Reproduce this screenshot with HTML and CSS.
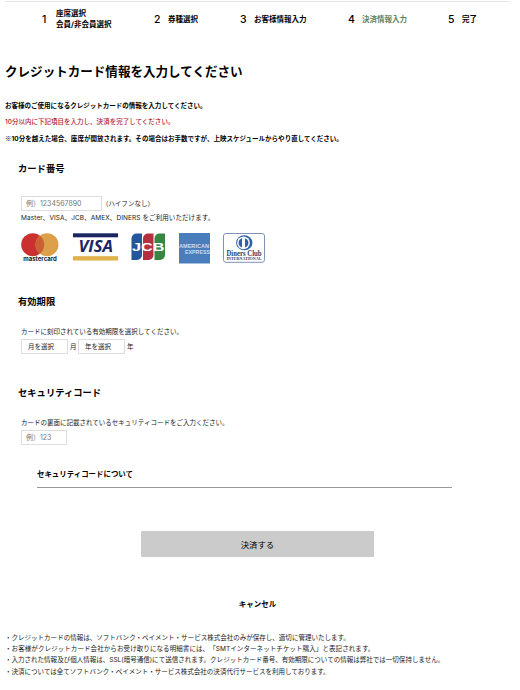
FILE: index.html
```html
<!DOCTYPE html>
<html lang="ja">
<head>
  <meta charset="UTF-8">
  <meta name="viewport" content="width=device-width, initial-scale=1.0">
  <title>決済情報入力</title>
  <link rel="stylesheet" href="styles.css">
</head>
<body>
  <header>
    <ol class="steps">
      <li class="step1"><span class="num">1</span><span class="double">座席選択<br>会員/非会員選択</span></li>
      <li class="step2"><span class="num">2</span><span>券種選択</span></li>
      <li class="step3"><span class="num">3</span><span>お客様情報入力</span></li>
      <li class="step4 current"><span class="num">4</span><span>決済情報入力</span></li>
      <li class="step5"><span class="num">5</span><span>完了</span></li>
    </ol>
  </header>

  <main>
    <h1>クレジットカード情報を入力してください</h1>
    <div class="lead">
      <p>お客様のご使用になるクレジットカードの情報を入力してください。</p>
      <p class="alert">10分以内に下記項目を入力し、決済を完了してください。</p>
      <p><span class="mark">※</span>10分を越えた場合、座席が開放されます。その場合はお手数ですが、上映スケジュールからやり直してください。</p>
    </div>

    <form>
      <section class="card-number">
        <h2>カード番号</h2>
        <div class="row">
          <input type="text" class="number" placeholder="例）1234567890">
          <span class="hyphen">（ハイフンなし）</span>
        </div>
        <p class="brands">Master、VISA、JCB、AMEX、DINERS をご利用いただけます。</p>
        <div class="logos">
          <svg class="mastercard" width="38" height="32" viewBox="0 0 38 32">
            <circle cx="11.7" cy="11.7" r="11.5" fill="#c9302f"/>
            <circle cx="26" cy="11.7" r="11.5" fill="#dda04a"/>
            <path d="M18.9 2.7a11.5 11.5 0 0 1 0 18a11.5 11.5 0 0 1 0-18z" fill="#cb6036"/>
            <text x="2.3" y="28.3" font-size="6" textLength="33.5" lengthAdjust="spacingAndGlyphs" class="mc-text">mastercard</text>
          </svg>
          <svg class="visa" width="45" height="30" viewBox="0 0 45 30">
            <rect y="0.3" width="45" height="4" fill="#1c2564"/>
            <rect y="23.2" width="45" height="4.3" fill="#dfb04b"/>
            <text x="5.5" y="19.3" font-size="15.5" textLength="34.5" lengthAdjust="spacingAndGlyphs" class="visa-text">VISA</text>
          </svg>
          <svg class="jcb" width="35" height="28" viewBox="0 0 35 28">
            <path d="M5 .5h6v21.5a5 5 0 0 1-5 5H.5V5.5a5 5 0 0 1 5-5z" fill="#24579a"/>
            <path d="M17 .5h5.5v21.5a5 5 0 0 1-5 5H12V5.5a5 5 0 0 1 5-5z" fill="#b5303f"/>
            <path d="M28.5.5H34v21.5a5 5 0 0 1-5 5h-5.5V5.5a5 5 0 0 1 5-5z" fill="#398542"/>
            <text x="1" y="18" font-size="11.5" textLength="32.5" lengthAdjust="spacingAndGlyphs" class="jcb-text">JCB</text>
          </svg>
          <svg class="amex" width="33" height="32" viewBox="0 0 33 32">
            <rect x="1" width="31" height="30.5" fill="#4a7dbb"/>
            <text x="1" y="15" font-size="5.8" textLength="30" lengthAdjust="spacingAndGlyphs" class="amex-text">AMERICAN</text>
            <text x="7" y="21.2" font-size="5.8" textLength="25" lengthAdjust="spacingAndGlyphs" class="amex-text">EXPRESS</text>
          </svg>
          <svg class="diners" width="42" height="30" viewBox="0 0 42 30">
            <rect x=".5" y=".5" width="41" height="28.8" rx="2.5" fill="#fff" stroke="#7e94b6"/>
            <ellipse cx="21.3" cy="9.8" rx="8.2" ry="7.5" fill="#2d62a5"/>
            <circle cx="20.5" cy="9.8" r="6.4" fill="#fff"/>
            <path d="M19 5.2v9.2a4.800 4.800 0 0 1 0-9.2zM22 5.200v9.2a4.800 4.800 0 0 0 0-9.2z" fill="#2d62a5"/>
            <text x="3.5" y="22.5" font-size="7.5" textLength="35" lengthAdjust="spacingAndGlyphs" class="diners-text">Diners Club</text>
            <text x="3.5" y="27.3" font-size="4.3" textLength="35" lengthAdjust="spacingAndGlyphs" class="diners-text">INTERNATIONAL</text>
          </svg>
        </div>
      </section>

      <section class="expiry">
        <h2>有効期限</h2>
        <p>カードに刻印されている有効期限を選択してください。</p>
        <div class="row">
          <select><option>月を選択</option></select>
          <span class="unit">月</span>
          <select><option>年を選択</option></select>
          <span class="unit">年</span>
        </div>
      </section>

      <section class="security">
        <h2>セキュリティコード</h2>
        <p>カードの裏面に記載されているセキュリティコードをご入力ください。</p>
        <div class="row">
          <input type="text" class="code" placeholder="例）123">
        </div>
        <h3>セキュリティコードについて</h3>
      </section>

      <button type="submit">決済する</button>
      <a href="#" class="cancel">キャンセル</a>
    </form>
  </main>

  <footer>
    <ul>
      <li>・クレジットカードの情報は、ソフトバンク・ペイメント・サービス株式会社のみが保存し、適切に管理いたします。</li>
      <li class="statement">・お客様がクレジットカード会社からお受け取りになる明細書には、「SMTインターネットチケット購入」と表記されます。</li>
      <li>・入力された情報及び個人情報は、SSL(暗号通信)にて送信されます。クレジットカード番号、有効期限についての情報は弊社では一切保持しません。</li>
      <li>・決済については全てソフトバンク・ペイメント・サービス株式会社の決済代行サービスを利用しております。</li>
    </ul>
  </footer>
</body>
</html>
```

FILE: styles.css
```css
* {
  box-sizing: border-box;
}
body {
  margin: 0;
  padding: 1px 5px 0;
  background: #fff;
  color: #000;
  font-family: Inter, "Noto Sans CJK JP", sans-serif;
  font-size: 6.5px;
  line-height: 11px;
  text-spacing-trim: space-all;
}
h1, h2, h3, p, ul, ol {
  margin: 0;
  padding: 0;
  white-space: nowrap;
}
header {
  width: 505px;
  height: 61px;
  border-top: 1px solid #e6e6e6;
}
.steps {
  display: flex;
  height: 35px;
  list-style: none;
  font-size: 7.5px;
  font-weight: bold;
}
.steps li {
  display: flex;
  align-items: center;
}
.num {
  width: 14px;
  font-size: 10.5px;
  font-weight: 500;
  color: #000;
}
.double {
  padding-bottom: 2px;
}
.step1 {
  width: 149px;
  padding-left: 37px;
}
.step2 {
  width: 86px;
}
.step3 {
  width: 108px;
}
.step4 {
  width: 100px;
}
.current {
  color: #5f8560;
}
h1 {
  height: 18px;
  font-size: 12.56px;
  line-height: 20px;
  font-weight: bold;
}
.lead {
  margin-top: 17px;
  font-size: 6.53px;
  font-weight: bold;
}
.lead p {
  height: 16px;
  line-height: 18px;
}
.lead .alert {
  color: #b5172c;
  font-weight: 500;
}
.mark {
  font-family: "Noto Sans CJK JP", sans-serif;
}
section {
  padding-left: 16px;
  color: #222;
}
section p {
  height: 11px;
  line-height: 13px;
}
h2 {
  height: 14px;
  margin-left: -3px;
  font-size: 9.3px;
  line-height: 16px;
  color: #000;
}
.row {
  display: flex;
  align-items: center;
  height: 15px;
}
input, select {
  height: 15px;
  margin: 0;
  border: 1px solid #ddd;
  border-radius: 0;
  background: #fff;
  font-family: inherit;
  font-size: 6.5px;
  color: #222;
}
input {
  padding: 0 4px;
}
input::placeholder {
  color: #777;
}
.card-number {
  height: 133px;
  padding-top: 16px;
}
.card-number .row {
  margin-top: 21px;
}
.number {
  width: 81px;
  font-size: 7px;
}
.hyphen {
  padding-top: 1px;
}
.brands {
  margin-top: 1px;
  letter-spacing: 0.09px;
}
.logos {
  display: flex;
  margin-top: 10px;
}
.visa {
  margin-left: 14px;
}
.jcb {
  margin-left: 13px;
}
.amex {
  margin-left: 12px;
}
.diners {
  margin-left: 12px;
}
.mc-text {
  font-family: Inter, sans-serif;
  font-weight: 700;
  fill: #222;
}
.visa-text {
  font-family: "Open Sans", sans-serif;
  font-weight: 700;
  font-style: italic;
  fill: #1c2564;
}
.jcb-text {
  font-family: "Liberation Sans", sans-serif;
  font-weight: bold;
  fill: #fff;
}
.amex-text {
  font-family: "Liberation Sans", sans-serif;
  font-weight: bold;
  fill: #c9dff0;
}
.diners-text {
  font-family: "Liberation Serif", serif;
  font-weight: bold;
  fill: #34415e;
}
.expiry {
  height: 91px;
  padding-top: 16px;
}
.expiry p, .security p {
  margin-top: 18px;
}
.expiry .row {
  margin-top: 2px;
}
select {
  width: 47px;
  padding: 1px 6px 0;
  appearance: none;
}
.unit {
  width: 10px;
  padding: 1px 0 0 2px;
}
.security {
  padding-top: 16px;
}
.security .row {
  margin-top: 2px;
}
.code {
  width: 46px;
  font-size: 7px;
}
h3 {
  width: 415px;
  height: 21px;
  margin: 22px 0 0 16px;
  border-bottom: 1px solid #999;
  font-size: 7.45px;
  line-height: 16px;
  color: #000;
}
button {
  display: block;
  width: 233px;
  height: 26px;
  margin: 43px 0 0 136px;
  padding: 0;
  border: 0;
  border-radius: 1px;
  background: #cbcbcb;
  color: #000;
  font-family: inherit;
  font-size: 8.4px;
  cursor: pointer;
}
.cancel {
  display: block;
  width: 505px;
  margin-top: 42px;
  color: #000;
  font-size: 7.5px;
  font-weight: bold;
  text-align: center;
  text-decoration: none;
}
footer {
  margin-top: 22px;
  color: #222;
}
footer ul {
  list-style: none;
}
footer li {
  height: 11.2px;
  font-size: 6.52px;
  line-height: 13px;
}
.statement {
  letter-spacing: 0.07px;
}
```
